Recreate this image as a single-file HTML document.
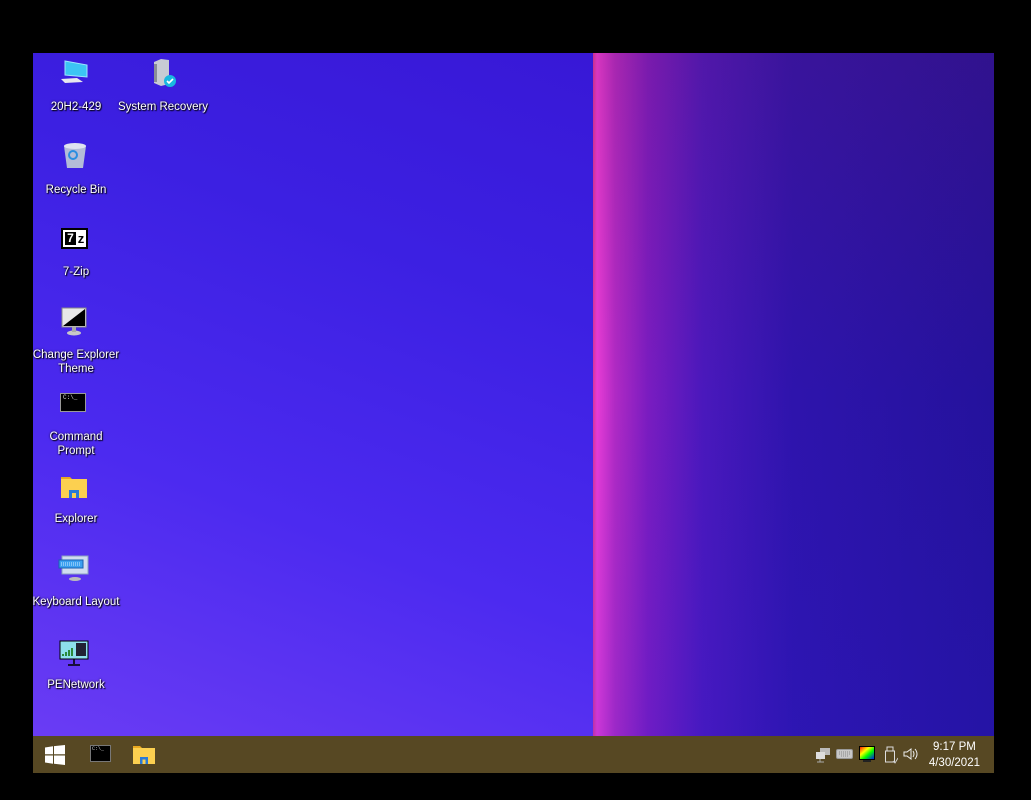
<!DOCTYPE html>
<html><head><meta charset="utf-8"><style>
*{margin:0;padding:0;box-sizing:border-box}
body{width:1031px;height:800px;background:#000;position:relative;overflow:hidden;font-family:"Liberation Sans",sans-serif}
#scr{position:absolute;left:33px;top:53px;width:961px;height:720px;overflow:hidden}
#left{position:absolute;left:0;top:0;width:561px;height:683px;background:linear-gradient(20deg,#6a3cf4 0%,#4c2af0 35%,#3c20e2 70%,#3818d6 100%)}
#right{position:absolute;left:560px;top:0;width:401px;height:683px;background:linear-gradient(90deg,#d8349a 0px,#e83cd6 4px,#b02ac4 22px,#7a1cc0 55px,#4a18bc 110px,#2e14ac 200px,#24129c 401px)}
#rightov{position:absolute;left:560px;top:0;width:401px;height:683px;background:linear-gradient(180deg,rgba(120,20,60,.15),rgba(0,0,0,0) 50%,rgba(40,30,220,.15))}
#tb{position:absolute;left:0;top:683px;width:961px;height:37px;background:#574823}
.lbl{position:absolute;width:110px;text-align:center;color:#fff;font-size:11.5px;line-height:14px;text-shadow:1px 1px 1px #000,0 0 2px rgba(0,0,0,.8)}
.ic{position:absolute}
.clock{position:absolute;right:14px;top:3px;color:#fff;font-size:11.5px;line-height:16px;text-align:center}
</style></head><body>
<div id="scr">
<div id="left"></div><div id="right"></div><div id="rightov"></div>

<svg class="ic" style="left:26px;top:6px" width="30" height="26" viewBox="0 0 30 26"><polygon points="6,2 28,6 28,18 6,16" fill="#3cc4f4" stroke="#9ee4ff"/><polygon points="2,20 18,19 24,23 6,24" fill="#e8e8ee"/></svg>
<div class="lbl" style="left:-12px;top:47px">20H2-429</div>
<svg class="ic" style="left:116px;top:5px" width="30" height="30" viewBox="0 0 30 30"><path d="M5 4 L12 1 L20 2 L20 26 L12 28 L5 25Z" fill="#c8ccd4"/><rect x="5" y="6" width="3" height="18" fill="#8a8e96"/><circle cx="21" cy="23" r="6" fill="#19b8e0"/><path d="M18 23l2 2 4-4" stroke="#fff" stroke-width="1.6" fill="none"/></svg>
<div class="lbl" style="left:75px;top:47px">System Recovery</div>
<svg class="ic" style="left:29px;top:89px" width="26" height="28" viewBox="0 0 26 28"><path d="M2 4 L24 4 L21 26 L5 26Z" fill="#b4bcd8"/><ellipse cx="13" cy="4" rx="11" ry="3" fill="#dfe3f0"/><circle cx="11" cy="13" r="4" fill="none" stroke="#2a8ee0" stroke-width="2"/></svg>
<div class="lbl" style="left:-12px;top:130px">Recycle Bin</div>
<div class="ic" style="left:28px;top:175px;width:27px;height:21px;background:#fff;border:2px solid #000;"><div style="position:absolute;left:2px;top:2px;width:11px;height:13px;background:#000;color:#fff;font:bold 12px/13px 'Liberation Sans';text-align:center">7</div><div style="position:absolute;left:13px;top:1px;width:10px;font:bold 13px/15px 'Liberation Sans';color:#000;text-align:center">z</div></div>
<div class="lbl" style="left:-12px;top:212px">7-Zip</div>
<svg class="ic" style="left:26px;top:254px" width="30" height="30" viewBox="0 0 30 30"><rect x="3" y="1" width="24" height="19" fill="#e8e8e8" stroke="#888"/><polygon points="4,19 26,2 26,19" fill="#000"/><ellipse cx="15" cy="26" rx="7" ry="2.5" fill="#c8c8c8"/><rect x="13" y="20" width="4" height="5" fill="#aaa"/></svg>
<div class="lbl" style="left:-12px;top:295px">Change Explorer<br>Theme</div>
<div class="ic" style="left:27px;top:340px;width:26px;height:19px;background:#000;border:1px solid #999;color:#ddd;font:6px/8px 'Liberation Mono';padding-left:2px">C:\_</div>
<div class="lbl" style="left:-12px;top:377px">Command<br>Prompt</div>
<svg class="ic" style="left:27px;top:421px" width="28" height="26" viewBox="0 0 28 26"><path d="M1 3h9l2 2h-11z" fill="#e8a820"/><rect x="1" y="5" width="26" height="19" fill="#fcd050"/><rect x="9" y="16" width="10" height="8" fill="#2a7ad8"/><rect x="12" y="19" width="4" height="5" fill="#fcd050"/></svg>
<div class="lbl" style="left:-12px;top:459px">Explorer</div>
<svg class="ic" style="left:25px;top:501px" width="32" height="28" viewBox="0 0 32 28"><rect x="4" y="2" width="26" height="18" fill="#d0dcf0" stroke="#8aa0c0"/><rect x="1" y="6" width="24" height="8" fill="#3aa0f0" stroke="#1a60b0"/><path d="M3 9h20M3 11h20" stroke="#cfe8ff" stroke-dasharray="1 1"/><ellipse cx="17" cy="25" rx="6" ry="2" fill="#bbb"/></svg>
<div class="lbl" style="left:-12px;top:542px">Keyboard Layout</div>
<svg class="ic" style="left:26px;top:587px" width="30" height="28" viewBox="0 0 30 28"><rect x="1" y="1" width="28" height="18" fill="#8ee0ec" stroke="#000"/><path d="M4 16v-2M7 16v-4M10 16v-6M13 16v-8" stroke="#2a8a3a" stroke-width="2"/><rect x="17" y="3" width="10" height="13" fill="#223"/><path d="M15 19v5M9 25h12" stroke="#000" stroke-width="1.5"/></svg>
<div class="lbl" style="left:-12px;top:625px">PENetwork</div>

<div id="tb">
 <svg style="position:absolute;left:12px;top:9px" width="20" height="20" viewBox="0 0 20 20"><path d="M0 2.5l8-1.2v8H0zM9 1.1L20 0v9.3H9zM0 10.5h8v8.2L0 17.5zM9 10.5h11V20L9 18.8z" fill="#fff"/></svg>
 <div style="position:absolute;left:57px;top:9px;width:21px;height:17px;background:#000;border:1px solid #777;color:#ccc;font:5px/7px 'Liberation Mono';padding-left:1px">C:\_</div>
 <svg style="position:absolute;left:100px;top:9px" width="22" height="20" viewBox="0 0 22 20"><path d="M0 1h7l2 2H0z" fill="#e8a820"/><rect x="0" y="3" width="22" height="16" fill="#fcd050"/><rect x="7" y="12" width="8" height="7" fill="#2a7ad8"/><rect x="9.5" y="14.5" width="3" height="4.5" fill="#fcd050"/></svg>
 <svg style="position:absolute;left:782px;top:11px" width="16" height="16" viewBox="0 0 16 16"><rect x="5" y="1" width="10" height="7" fill="#bbb"/><rect x="1" y="5" width="9" height="7" fill="#ddd"/><path d="M5 12v3M2 15h7" stroke="#aaa"/></svg>
 <svg style="position:absolute;left:803px;top:12px" width="17" height="12" viewBox="0 0 17 12"><rect x="0.5" y="1.5" width="16" height="9" rx="1.5" fill="#c8c8c8" stroke="#999"/><path d="M3 4h11M3 6h11M5 8h7" stroke="#888" stroke-dasharray="1 1"/></svg>
 <svg style="position:absolute;left:826px;top:10px" width="16" height="16" viewBox="0 0 16 16"><defs><linearGradient id="g" x1="0" x2="1" y1="0" y2="1"><stop offset="0" stop-color="#f00"/><stop offset=".35" stop-color="#ff0"/><stop offset=".6" stop-color="#0f0"/><stop offset="1" stop-color="#00f"/></linearGradient></defs><rect x="0.5" y="0.5" width="15" height="13" fill="url(#g)" stroke="#000"/><rect x="4" y="14" width="8" height="2" fill="#222"/></svg>
 <svg style="position:absolute;left:851px;top:10px" width="14" height="18" viewBox="0 0 14 18"><path d="M3 1h6v4H3zM1.5 5h9v11h-9z" fill="none" stroke="#ddd"/><path d="M9 15l2 2 3-5" stroke="#ccc" fill="none"/></svg>
 <svg style="position:absolute;left:870px;top:11px" width="16" height="14" viewBox="0 0 16 14"><path d="M1 5h3l4-3v10l-4-3H1z" fill="none" stroke="#eee"/><path d="M10 4q2 3 0 6M12 2q4 5 0 10" stroke="#eee" fill="none"/></svg>
 <div class="clock">9:17 PM<br>4/30/2021</div>
</div>
</div>
</body></html>
